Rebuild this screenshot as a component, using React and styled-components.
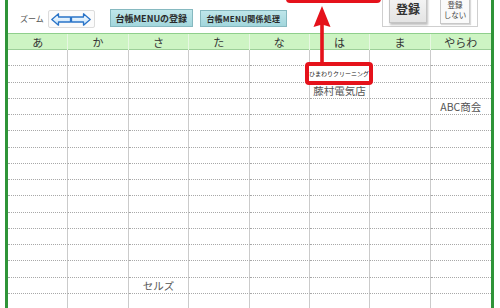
import styled, { createGlobalStyle } from "styled-components";

const GlobalStyle = createGlobalStyle`
  body {
    margin: 0;
    background: #fff;
    font-family: "Noto Sans CJK JP", "Noto Sans", sans-serif;
  }
`;

const COLUMNS = ["あ", "か", "さ", "た", "な", "は", "ま", "やらわ"];

// row index -> { column index: text }
const CELLS = {
  2: { 5: "藤村電気店" },
  3: { 7: "ABC商会" },
  14: { 2: "セルズ" },
};

const ROW_COUNT = 16;

function ZoomIcon() {
  return (
    <svg width="40" height="13" viewBox="0 0 40 13">
      <defs>
        <linearGradient id="arrowFill" x1="0" y1="0" x2="0" y2="1">
          <stop offset="0" stopColor="#ffffff" />
          <stop offset="1" stopColor="#bfe0fb" />
        </linearGradient>
      </defs>
      <path
        d="M0.8 6.5 L7.5 0.8 L7.5 4 L19.5 4 L19.5 9 L7.5 9 L7.5 12.2 Z"
        fill="url(#arrowFill)"
        stroke="#2a74c8"
        strokeWidth="1.3"
        strokeLinejoin="round"
      />
      <path
        d="M39.2 6.5 L32.5 0.8 L32.5 4 L20.5 4 L20.5 9 L32.5 9 L32.5 12.2 Z"
        fill="url(#arrowFill)"
        stroke="#2a74c8"
        strokeWidth="1.3"
        strokeLinejoin="round"
      />
    </svg>
  );
}

function App() {
  return (
    <>
      <GlobalStyle />
      <StPage>
        <StSheet>
          <StToolbar>
            <StZoomLabel>ズーム</StZoomLabel>
            <StZoomButton>
              <ZoomIcon />
            </StZoomButton>
            <StMenuButton>台帳MENUの登録</StMenuButton>
            <StMenuButton $small>台帳MENU関係処理</StMenuButton>
            <StSavePanel>
              <StSaveButton>登録</StSaveButton>
              <StNoSaveButton>
                登録
                <br />
                しない
              </StNoSaveButton>
            </StSavePanel>
          </StToolbar>

          <StHeader>
            {COLUMNS.map((c) => (
              <StHeadCell key={c}>{c}</StHeadCell>
            ))}
          </StHeader>

          <StBody>
            {Array.from({ length: ROW_COUNT }).map((_, r) =>
              COLUMNS.map((c, ci) => (
                <StCell key={r + "-" + ci}>{CELLS[r]?.[ci] || ""}</StCell>
              ))
            )}
          </StBody>

          {/* annotation overlays */}
          <StTopFrame />
          <StArrow width="20" height="64" viewBox="0 0 20 64">
            <rect x="8.2" y="24" width="3.6" height="40" fill="#e5121b" />
            <path d="M10 6 L18.5 27 L10 24.5 L1.5 27 Z" fill="#e5121b" />
          </StArrow>
          <StCallout>ひまわりクリーニング</StCallout>
        </StSheet>
      </StPage>
    </>
  );
}

export default App;

const StPage = styled.div`
  width: 500px;
  height: 308px;
  padding-left: 5px;
  box-sizing: border-box;
  background: #fff;
`;

const StSheet = styled.div`
  position: relative;
  width: 489px;
  height: 308px;
  box-sizing: border-box;
  border-left: 3px solid #2f9438;
  border-right: 3px solid #2f9438;
  display: flex;
  flex-direction: column;
  overflow: hidden;
`;

const StToolbar = styled.div`
  display: flex;
  align-items: flex-start;
  height: 33px;
  flex: none;
`;

const StZoomLabel = styled.div`
  margin: 14px 0 0 12px;
  font-size: 8px;
  line-height: 10px;
  color: #555;
`;

const StZoomButton = styled.div`
  margin: 10px 0 0 4px;
  width: 47px;
  height: 18px;
  box-sizing: border-box;
  display: flex;
  align-items: center;
  justify-content: center;
  background: #fbfbfb;
  border: 1px solid #dcdcdc;
  border-radius: 2px;
`;

const StMenuButton = styled.div`
  margin: ${(p) => (p.$small ? "10px 0 0 7px" : "9px 0 0 15px")};
  width: ${(p) => (p.$small ? "87px" : "83px")};
  height: ${(p) => (p.$small ? "17px" : "18px")};
  box-sizing: border-box;
  display: flex;
  align-items: center;
  justify-content: center;
  background: linear-gradient(#bfe6ea, #a2d6dc);
  border: 1px solid #86b9c0;
  font-size: ${(p) => (p.$small ? "8px" : "9px")};
  font-weight: bold;
  color: #2a2a2a;
  white-space: nowrap;
  letter-spacing: ${(p) => (p.$small ? "0.2px" : "0")};
`;

const StSavePanel = styled.div`
  margin: -9px 13px 0 auto;
  width: 96px;
  height: 36px;
  box-sizing: border-box;
  display: flex;
  align-items: flex-start;
  gap: 13px;
  padding: 1px 0 0 6px;
  background: #fff;
  border: 1px solid #cfcfcf;
`;

const StSaveButton = styled.div`
  width: 38px;
  height: 30px;
  box-sizing: border-box;
  display: flex;
  align-items: center;
  justify-content: center;
  background: linear-gradient(#f7f7f7, #e4e4e4);
  border: 1px solid #c4c4c4;
  box-shadow: 1px 2px 2px rgba(0, 0, 0, 0.25);
  font-size: 12px;
  font-weight: bold;
  color: #333;
`;

const StNoSaveButton = styled.div`
  margin-top: 2px;
  width: 30px;
  height: 29px;
  box-sizing: border-box;
  display: flex;
  align-items: center;
  justify-content: center;
  text-align: center;
  background: #fafafa;
  border: 1px solid #c8c8c8;
  box-shadow: 1px 1px 1px rgba(0, 0, 0, 0.15);
  font-size: 7.5px;
  line-height: 10px;
  color: #444;
`;

const StHeader = styled.div`
  display: grid;
  grid-template-columns: repeat(8, 1fr);
  height: 17px;
  flex: none;
  box-sizing: border-box;
  background: #cdf4c3;
  border-top: 1px solid #8fcf8c;
  border-bottom: 1px solid #9ccf98;
`;

const StHeadCell = styled.div`
  display: flex;
  align-items: center;
  justify-content: center;
  border-right: 1px solid #e6f7e1;
  font-size: 11px;
  color: #333;

  &:last-child {
    border-right: none;
  }
`;

const StBody = styled.div`
  display: grid;
  flex: none;
  grid-template-columns: repeat(8, 1fr);
  grid-auto-rows: 16.27px;
`;

const StCell = styled.div`
  display: flex;
  align-items: center;
  justify-content: center;
  box-sizing: border-box;
  border-right: 1px solid #cbcbcb;
  border-bottom: 1px dotted #a8a8a8;
  font-size: 10.5px;
  color: #555;
  white-space: nowrap;
  overflow: hidden;

  &:nth-child(8n) {
    border-right: none;
  }
`;

const StTopFrame = styled.div`
  position: absolute;
  left: 278px;
  top: -20px;
  width: 95px;
  height: 23px;
  box-sizing: border-box;
  border: 3px solid #e5121b;
  border-radius: 4px;
`;

const StArrow = styled.svg`
  position: absolute;
  left: 304px;
  top: 0;
`;

const StCallout = styled.div`
  position: absolute;
  left: 297px;
  top: 62px;
  width: 68px;
  height: 23px;
  box-sizing: border-box;
  display: flex;
  align-items: center;
  justify-content: center;
  background: #fff;
  border: 4px solid #e5121b;
  border-radius: 4px;
  font-size: 6px;
  color: #222;
  white-space: nowrap;
`;
